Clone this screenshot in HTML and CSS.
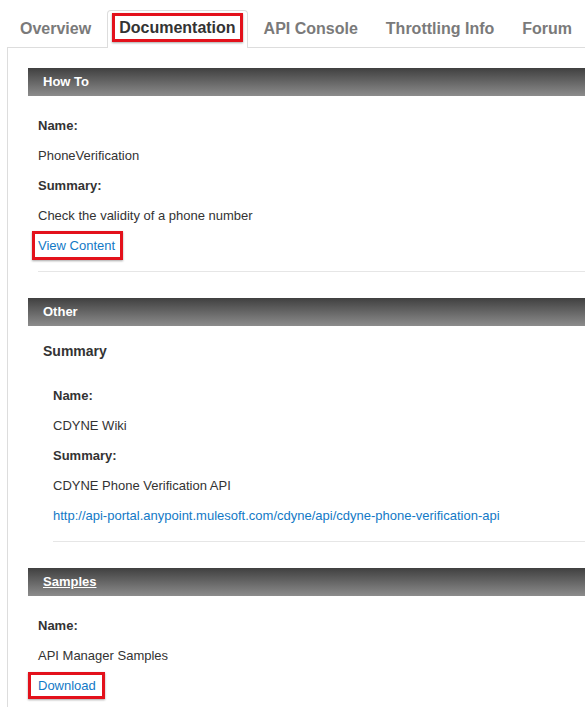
FILE: index.html
```html
<!DOCTYPE html>
<html>
<head>
<meta charset="utf-8">
<link rel="stylesheet" href="styles.css">
</head>
<body>
<div class="page">
  <ul class="tabs">
    <li class="tab">Overview</li>
    <li class="tab active"><span class="mark mark-tab">Documentation</span></li>
    <li class="tab">API Console</li>
    <li class="tab">Throttling Info</li>
    <li class="tab">Forum</li>
  </ul>
  <div class="panel">
    <section class="sec">
      <div class="sec-head">How To</div>
      <div class="sec-body">
        <div class="line label">Name:</div>
        <div class="line">PhoneVerification</div>
        <div class="line label">Summary:</div>
        <div class="line">Check the validity of a phone number</div>
        <div class="line"><a class="link mark mark-view" href="#">View Content</a></div>
        <div class="sep"></div>
      </div>
    </section>
    <section class="sec">
      <div class="sec-head">Other</div>
      <div class="sec-body other">
        <h3 class="sub">Summary</h3>
        <div class="sub-body">
          <div class="line label">Name:</div>
          <div class="line">CDYNE Wiki</div>
          <div class="line label">Summary:</div>
          <div class="line">CDYNE Phone Verification API</div>
          <div class="line"><a class="link" href="#">http://api-portal.anypoint.mulesoft.com/cdyne/api/cdyne-phone-verification-api</a></div>
          <div class="sep sep-last"></div>
        </div>
      </div>
    </section>
    <section class="sec">
      <div class="sec-head"><span class="u">Samples</span></div>
      <div class="sec-body samples">
        <div class="line label">Name:</div>
        <div class="line">API Manager Samples</div>
        <div class="line"><a class="link mark mark-dl" href="#">Download</a></div>
      </div>
    </section>
  </div>
</div>
</body>
</html>
```

FILE: styles.css
```css
html, body {
  margin: 0;
  padding: 0;
  overflow: hidden;
  background: #fff;
}
body {
  font-family: "Liberation Sans", Arial, Helvetica, sans-serif;
  color: #333;
  font-size: 13px;
}
.page {
  padding: 10px 0 0 7px;
}
.tabs {
  list-style: none;
  margin: 0;
  padding: 0;
  display: flex;
  border-bottom: 1px solid #ddd;
}
.tab {
  height: 36px;
  line-height: 36px;
  padding: 0 11px;
  margin-right: 4px;
  border: 1px solid transparent;
  border-bottom: none;
  border-radius: 4px 4px 0 0;
  font-size: 16px;
  font-weight: bold;
  color: #7a7a7a;
  white-space: nowrap;
}
.tab:first-child {
  margin-left: 1px;
}
.tab.active {
  border-color: #ddd;
  background: #fff;
  color: #333;
  margin-bottom: -1px;
  height: 37px;
}
.mark {
  border: 3px solid #e3111b;
  box-shadow: 0 1px 2px rgba(0, 0, 0, 0.35);
}
.mark-tab {
  display: inline-block;
  line-height: 23px;
  padding: 0 4px 0 4px;
  margin: 0 -7px;
  vertical-align: 1px;
}
.panel {
  border-left: 1px solid #ddd;
  padding: 20px 0 0 20px;
}
.sec-head {
  height: 28px;
  line-height: 28px;
  padding-left: 15px;
  background: linear-gradient(#404040, #8c8c8c);
  color: #fff;
  font-weight: bold;
  font-size: 13px;
}
.u {
  text-decoration: underline;
}
.sec-body {
  padding: 15px 0 26px 10px;
}
.line {
  height: 30px;
  line-height: 30px;
  white-space: nowrap;
}
.label {
  font-weight: bold;
}
.link {
  color: #1279c6;
  text-decoration: none;
}
.mark-view {
  display: inline-block;
  line-height: 23px;
  padding: 0 5px 0 3px;
  margin-left: -6px;
}
.mark-dl {
  display: inline-block;
  line-height: 21px;
  padding: 0 6px 0 7px;
  margin-left: -10px;
}
.sep {
  margin-top: 10px;
  border-top: 1px solid #e6e6e6;
}
.other {
  padding-top: 10px;
  padding-left: 15px;
}
.sub {
  margin: 0;
  height: 30px;
  line-height: 30px;
  font-size: 14px;
  font-weight: bold;
}
.sub-body {
  padding: 15px 0 0 10px;
}
.sep-last {
  margin-top: 10px;
}
.samples {
  padding-top: 15px;
}
```
